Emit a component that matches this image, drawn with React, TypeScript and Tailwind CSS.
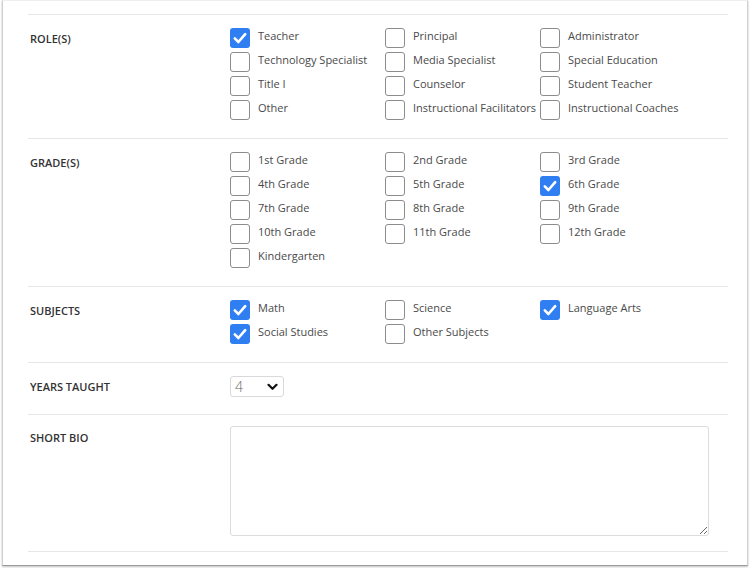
import React from "react";

type Opt = { label: string; checked?: boolean };

const roles: Opt[] = [
  { label: "Teacher", checked: true },
  { label: "Principal" },
  { label: "Administrator" },
  { label: "Technology Specialist" },
  { label: "Media Specialist" },
  { label: "Special Education" },
  { label: "Title I" },
  { label: "Counselor" },
  { label: "Student Teacher" },
  { label: "Other" },
  { label: "Instructional Facilitators" },
  { label: "Instructional Coaches" },
];

const grades: Opt[] = [
  { label: "1st Grade" },
  { label: "2nd Grade" },
  { label: "3rd Grade" },
  { label: "4th Grade" },
  { label: "5th Grade" },
  { label: "6th Grade", checked: true },
  { label: "7th Grade" },
  { label: "8th Grade" },
  { label: "9th Grade" },
  { label: "10th Grade" },
  { label: "11th Grade" },
  { label: "12th Grade" },
  { label: "Kindergarten" },
];

const subjects: Opt[] = [
  { label: "Math", checked: true },
  { label: "Science" },
  { label: "Language Arts", checked: true },
  { label: "Social Studies", checked: true },
  { label: "Other Subjects" },
];

function Box({ checked }: { checked?: boolean }) {
  if (checked) {
    return (
      <span className="flex h-[20px] w-[20px] shrink-0 items-center justify-center rounded-[3px] bg-[#2f7ff2]">
        <svg width="20" height="20" viewBox="0 0 20 20">
          <path
            d="M4.8 10.4 L8.4 14 L15.2 6.2"
            fill="none"
            stroke="#fff"
            strokeWidth="2.6"
            strokeLinecap="round"
            strokeLinejoin="round"
          />
        </svg>
      </span>
    );
  }
  return (
    <span className="block h-[20px] w-[20px] shrink-0 rounded-[3px] border border-[#8c8c8c] bg-white" />
  );
}

function Options({ items }: { items: Opt[] }) {
  return (
    <div className="grid grid-cols-[155px_155px_155px]">
      {items.map((o) => (
        <div key={o.label} className="flex h-[24px] items-start gap-[8px]">
          <Box checked={o.checked} />
          <span className="whitespace-nowrap text-[11px] leading-[16px] text-[#4a4a4a]">
            {o.label}
          </span>
        </div>
      ))}
    </div>
  );
}

function Section({ label, children }: { label: string; children: React.ReactNode }) {
  return (
    <div className="flex border-t border-[#e6e6e6] pt-[13px] pb-[14px]">
      <div className="w-[202px] shrink-0 pl-[2px]">
        <div className="mt-[3px] text-[11px] font-semibold leading-[16px] text-[#333]">{label}</div>
      </div>
      <div className="flex-1">{children}</div>
    </div>
  );
}

export default function App() {
  return (
    <div
      className="h-[568px] w-[751px] bg-white pl-[2px] pr-[3px] pb-[2px]"
      style={{ fontFamily: '"Open Sans", "Noto Sans", sans-serif' }}
    >
      <div className="h-full border-x border-b border-t border-x-[#cfcfcf] border-b-[#9a9a9a] border-t-[#efefef] pl-[25px] pr-[19px] pt-[13px] shadow-[0_1px_2px_rgba(0,0,0,0.25)]">
        <Section label="ROLE(S)">
          <Options items={roles} />
        </Section>
        <Section label="GRADE(S)">
          <Options items={grades} />
        </Section>
        <Section label="SUBJECTS">
          <Options items={subjects} />
        </Section>
        <Section label="YEARS TAUGHT">
          <div className="h-[24px]">
            <div className="flex h-[21px] w-[54px] items-center justify-between rounded-[3px] border border-[#d9d9d9] bg-white pl-[4px] pr-[5px]">
              <span className="text-[14px] font-light leading-none text-[#666]">4</span>
              <svg width="11" height="8" viewBox="0 0 11 8">
                <path
                  d="M1.5 1.8 L5.5 5.8 L9.5 1.8"
                  fill="none"
                  stroke="#111"
                  strokeWidth="2.2"
                  strokeLinecap="round"
                  strokeLinejoin="round"
                />
              </svg>
            </div>
          </div>
        </Section>
        <div className="flex border-y border-[#e6e6e6] pt-[11px] pb-[15px]">
          <div className="w-[202px] shrink-0 pl-[2px]">
            <div className="mt-[4px] text-[11px] font-semibold leading-[16px] text-[#333]">SHORT BIO</div>
          </div>
          <textarea className="block h-[110px] w-[479px] rounded-[3px] border border-[#dcdcdc] bg-white outline-none" />
        </div>
      </div>
    </div>
  );
}
